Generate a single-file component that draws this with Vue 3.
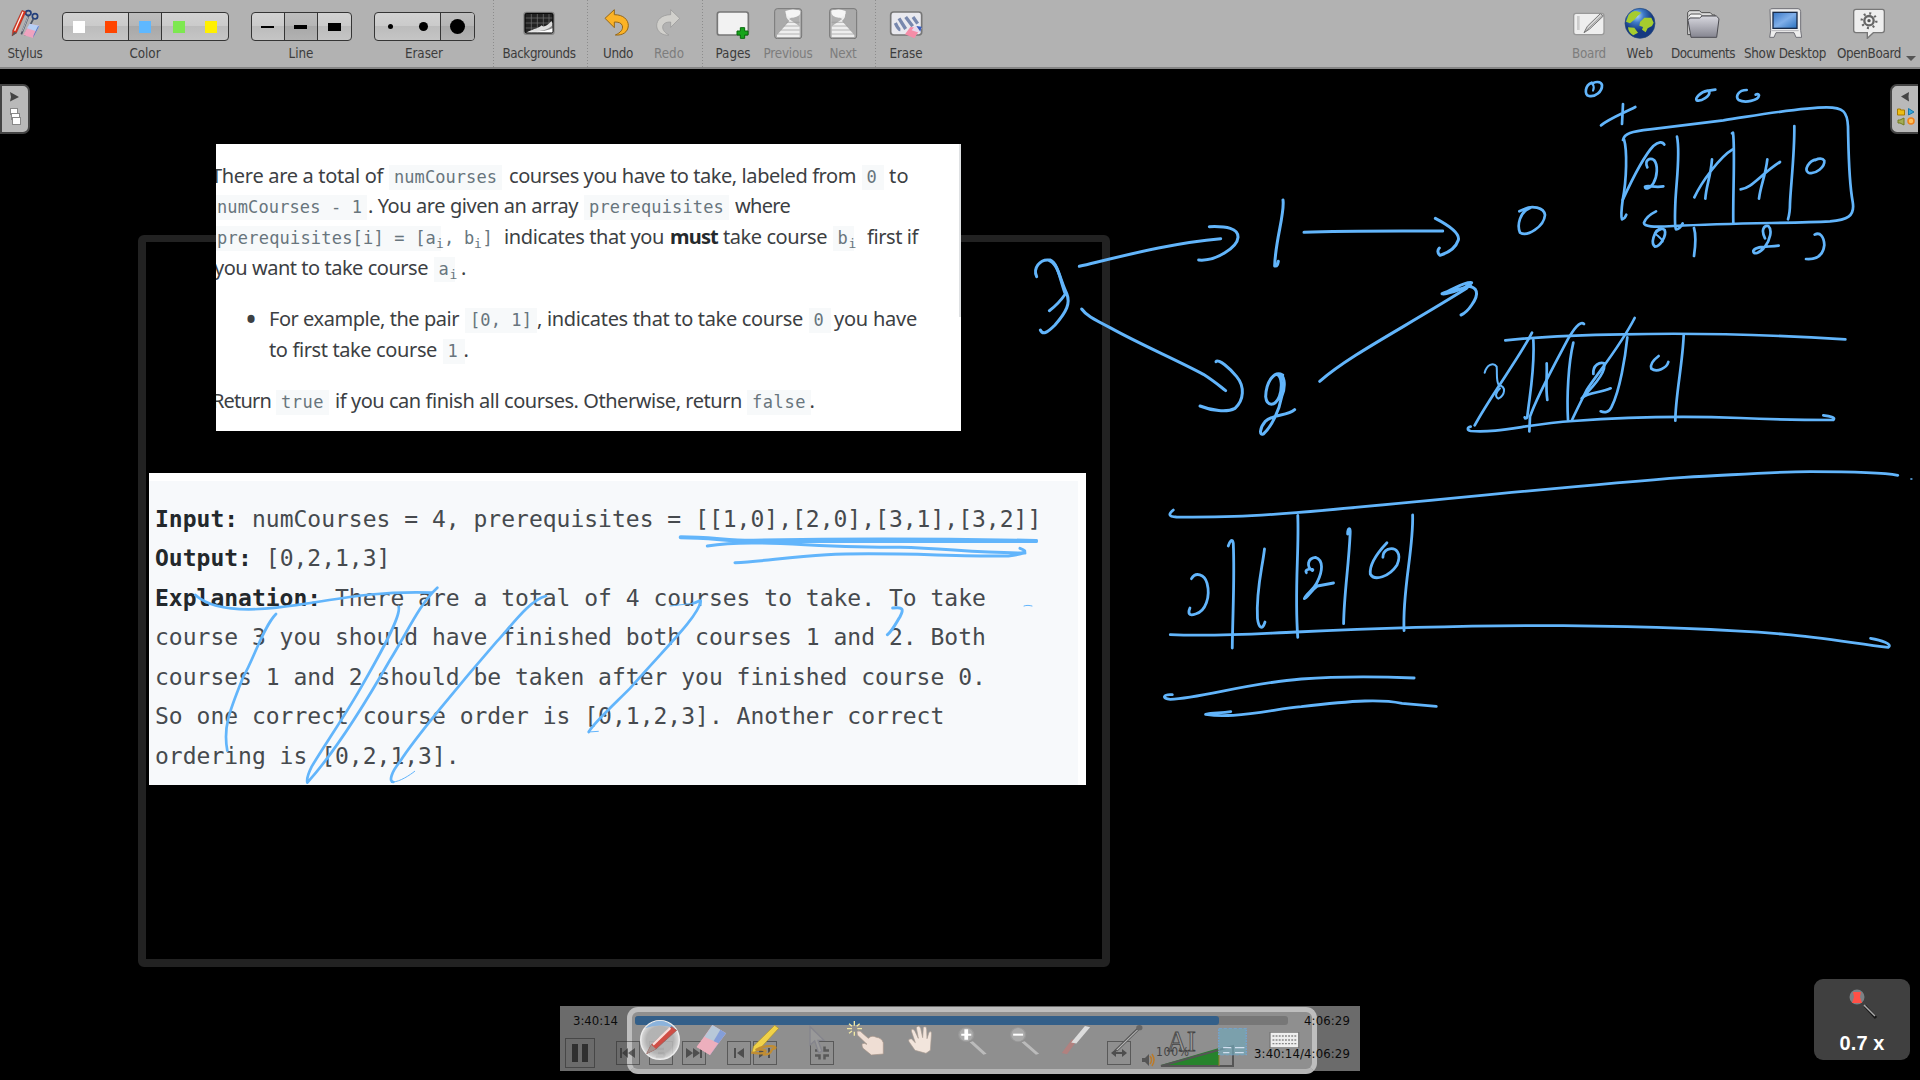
<script setup>
// Stretches or tightens a text run to the width given in pixels.
const vFit = {
  mounted(el, { value }) {
    const range = document.createRange()
    range.selectNodeContents(el)
    const natural = range.getBoundingClientRect().width
    el.style.letterSpacing = (value - natural) / el.textContent.length + 'px'
  }
}

const place = (runs) => {
  let end = 0
  return runs.map(([text, x, w, kind = 'plain', sub = '']) => {
    const run = { text, w, kind, sub, gap: x - end }
    end = x + w
    return run
  })
}

const statement = [
  [['There are a total of', -5, 172], ['numCourses', 178, 103, 'code'], ['courses you have to take, labeled from', 293, 347], ['0', 650.5, 12, 'code'], ['to', 673, 20]],
  [['numCourses - 1', 1, 145, 'code'], ['. You are given an array', 152, 210], ['prerequisites', 373, 135, 'code'], ['where', 519, 55]],
  [['prerequisites[i] = [a', 1, 219, 'code', 'i'], [', b', 228, 30, 'code flat', 'i'], [']', 266.5, 11, 'code flat'], ['indicates that you', 288, 160], ['must', 454, 48, 'bold'], ['take course', 507, 104], ['b', 621.5, 11, 'code', 'i'], ['first if', 651, 51]],
  [['you want to take course', -2, 214], ['a', 222.5, 11, 'code', 'i'], ['.', 245, 5]],
  [['•', 29, 12, 'dot'], ['For example, the pair', 53, 190], ['[0, 1]', 254, 62, 'code'], [', indicates that to take course', 321, 266], ['0', 597.5, 12, 'code'], ['you have', 618, 83]],
  [['to first take course', 53, 168], ['1', 231.5, 12, 'code'], ['.', 247.5, 5]],
  [['Return', -4, 59], ['true', 65, 43, 'code'], ['if you can finish all courses. Otherwise, return', 119, 407], ['false', 536, 54, 'code'], ['.', 593.5, 5]]
].map(place)

const example = [
  ['Input:', ' numCourses = 4, prerequisites = [[1,0],[2,0],[3,1],[3,2]]'],
  ['Output:', ' [0,2,1,3]'],
  ['Explanation:', ' There are a total of 4 courses to take. To take'],
  ['', 'course 3 you should have finished both courses 1 and 2. Both'],
  ['', 'courses 1 and 2 should be taken after you finished course 0.'],
  ['', 'So one correct course order is [0,1,2,3]. Another correct'],
  ['', 'ordering is [0,2,1,3].']
]

const third = 1 / 3
const ink = [
  // graph 3 -> 1 -> 0, 3 -> 2 -> 0
  { t: `translate(1000 180) scale(${third})`, w: 3, p: [
    'M110 290C98 265 120 238 145 240C175 250 180 300 200 340C212 370 200 395 165 435C140 460 128 465 121 450',
    'M150 240C175 250 180 300 196 342C180 365 165 380 148 392',
    'M238 259C380 225 520 188 662 176', 'M628 140C680 138 715 145 714 172C712 200 650 245 596 240',
    'M245 387C258 405 275 415 330 443C430 498 520 535 610 583C640 602 655 615 677 632',
    'M648 545C655 535 690 565 710 590C735 620 732 660 705 685C680 698 635 692 600 678',
    'M849 60C855 100 826 180 824 258C832 260 834 250 835 244',
    'M912 157C1050 152 1200 154 1328 153', 'M1306 115C1350 138 1380 160 1375 180C1365 210 1340 220 1320 226C1312 220 1312 210 1318 204',
    'M848 585C820 570 798 610 797 650C800 680 825 680 838 650C848 620 845 590 832 584C855 575 858 620 845 650C838 690 815 740 790 762C778 768 778 745 795 725C820 700 860 710 884 689',
    'M959 604C1050 525 1200 450 1400 325', 'M1326 341C1360 330 1390 305 1415 308C1400 325 1350 340 1330 342M1350 336L1412 318', 'M1400 318C1432 320 1440 340 1415 375C1405 390 1395 400 1383 405'
  ] },
  // in-degree table and queue
  { t: `translate(1440 70) scale(${third})`, w: 2.7, p: [
    'M455 38C435 45 432 75 447 78C465 82 487 65 486 45C484 33 462 34 458 42',
    'M483 166C510 145 545 132 586 111M549 102L546 162',
    'M803 62C780 66 765 85 770 91C785 95 810 78 808 66C806 60 795 62 790 66M806 62L826 59',
    'M920 60C895 60 885 80 896 90C915 100 955 92 957 76C955 71 950 72 947 74',
    'M549 210C552 190 575 184 630 178L850 151C950 136 1080 112 1160 112C1210 112 1222 125 1224 170C1226 260 1226 330 1238 395C1246 440 1220 450 1170 454C1050 460 900 458 700 468C640 472 610 470 612 458C618 440 632 432 648 424',
    'M552 208C562 240 560 330 548 390C544 420 542 440 546 448C554 446 557 440 559 434',
    'M548 390C580 320 610 260 640 228C655 214 668 214 673 224',
    'M622 292C612 270 630 262 642 270C655 285 652 320 640 340C630 356 615 360 615 350C625 345 645 354 670 349',
    'M711 200C722 250 708 340 706 400C705 430 703 470 708 478C716 478 724 468 728 460',
    'M816 268C812 320 798 350 796 386M763 382C785 335 840 260 878 238',
    'M876 190L879 188C886 240 878 380 880 460',
    'M982 268C976 320 962 345 957 386M902 358C935 355 960 315 1020 276',
    'M1063 168C1064 250 1052 350 1050 400C1050 420 1048 435 1044 448',
    'M1130 268C1105 272 1092 300 1105 308C1128 315 1155 290 1153 272C1148 264 1136 265 1126 270',
    'M662 478C640 485 632 520 645 530C662 530 680 495 674 480C664 470 648 480 645 490',
    'M762 474C770 500 766 530 762 558',
    'M975 505C962 480 972 465 985 468C998 480 990 510 975 530C960 550 938 556 940 542C950 526 985 532 1016 527',
    'M1124 494C1140 485 1152 500 1153 525C1150 550 1135 570 1098 567',
    'M270 414C240 425 230 465 240 488C262 502 312 470 315 435C312 412 275 405 252 418L238 424',
    'M196 811C300 800 420 795 550 793C750 788 1000 795 1216 808',
    'M92 1070C82 1072 80 1080 92 1083C180 1090 260 1062 400 1053C600 1038 750 1038 900 1044C1020 1050 1120 1050 1180 1050C1188 1042 1170 1038 1150 1036',
    'M276 788C240 860 150 980 104 1066',
    'M280 810C285 900 268 980 262 1040C260 1048 255 1046 254 1042',
    'M432 762C420 750 400 780 385 805C340 890 290 980 270 1040L268 1084',
    'M320 880C322 920 316 950 322 990', 'M400 818C385 880 380 980 384 1050',
    'M584 744C540 830 480 900 440 960C425 990 410 1020 396 1050',
    'M460 912C458 885 480 875 492 880C500 900 470 940 425 985C445 965 480 970 512 955',
    'M562 802C556 860 540 960 515 1010C508 1026 495 1030 482 1024',
    'M656 858C640 870 630 885 634 896C650 908 680 895 685 876',
    'M731 796C728 880 706 980 706 1052'
  ] },
  { t: `translate(1440 70) scale(${third})`, w: 2, p: [
    'M134 908C140 885 160 875 170 890C172 915 168 930 176 945C200 950 195 975 175 986C165 980 165 970 180 955',
    'M458 42C462 48 462 56 459 62', 'M645 490C655 500 665 505 668 515'
  ] },
  // resulting order 3, 1, 2, 0
  { t: `translate(1130 450) scale(.5038 ${third})`, w: 2.8, p: [
    'M86 180C76 192 76 200 92 201C180 202 230 200 330 188C560 160 850 110 1100 82C1200 75 1270 65 1350 65C1420 65 1490 66 1524 76',
    'M80 554C170 560 240 552 330 546C500 534 700 526 860 527C1050 530 1200 540 1300 553C1370 562 1440 580 1505 592C1515 582 1490 570 1470 565',
    'M122 386C130 365 148 372 153 400C160 440 150 485 130 492C116 500 115 488 119 474',
    'M195 288C198 275 203 262 205 280C208 380 204 480 203 594',
    'M267 297C262 360 250 420 253 505C255 530 262 545 268 516',
    'M333 196C336 300 326 420 333 562',
    'M350 368C345 355 368 355 362 362C350 350 352 325 368 322C385 330 382 365 372 395C365 420 350 430 346 446C352 445 360 420 372 408L404 399',
    'M432 252C432 235 438 228 437 250C434 350 425 430 424 521',
    'M510 278C490 310 475 345 477 372C485 395 515 380 530 345C540 310 528 290 512 298C502 305 502 315 502 322',
    'M561 195C563 300 540 420 544 542',
    'M84 734C66 732 62 746 80 748C140 745 230 700 340 687C420 678 500 680 564 684',
    'M200 785C180 790 165 788 150 793C180 800 190 796 205 796C260 790 300 775 340 770C450 750 500 748 540 760L608 769'
  ] },
  { t: `translate(1130 450) scale(.5038 ${third})`, w: 1.5, p: ['M1550 87L1552 87'] },
  // marks over the example
  { t: `translate(130 460) scale(${third})`, w: 2.7, p: [
    'M196 405C240 445 330 455 440 443C600 425 700 392 905 398',
    'M438 462C400 500 370 600 340 650C300 750 278 800 292 872',
    'M806 440C815 470 740 600 700 670C650 760 580 860 545 920C530 950 530 960 532 968C620 870 700 740 780 600C830 520 870 430 922 383',
    'M1248 408C1200 420 1150 490 1100 545C1000 660 850 840 810 905C785 935 775 965 790 966',
    'M1690 430C1705 425 1712 418 1712 424C1705 470 1600 570 1500 685C1450 735 1390 790 1376 816'
  ] },
  { t: `translate(130 460) scale(${third})`, w: 1, p: ['M790 966C810 965 840 945 854 934', 'M1376 816L1405 814', 'M1620 438L1690 430', 'M2682 438C2690 435 2698 436 2706 438'] },
  { t: `translate(620 460) scale(${third})`, w: 3, p: [
    'M262 258C400 235 560 262 840 262C980 265 1060 279 1215 279',
    'M1200 265C1230 275 1210 282 1165 288C1000 290 800 275 620 284C500 290 430 305 345 308',
    'M818 444C850 440 852 448 840 470C825 495 815 515 802 524'
  ] },
  { t: `translate(620 460) scale(${third})`, w: 4, p: ['M182 232C270 232 330 243 400 242C600 238 900 236 1248 243', 'M400 243L1248 243'] }
]

const swatches = ['#ffffff', '#ff4500', '#5fb8ff', '#7de850', '#fff000']
</script>

<template>
  <div class="screen">
    <header class="toolbar">
      <div class="tool w50">
        <svg class="icon" viewBox="24 20 102 96">
          <g fill="none" stroke="#223f7c" stroke-width="5"><ellipse cx="85" cy="38" rx="8" ry="7"/><ellipse cx="105" cy="48" rx="8" ry="8"/></g>
          <path d="M86 46L64 102M100 56L74 105" stroke="#4e5666" stroke-width="5"/>
          <path d="M84 50L67 93" stroke="#e2e5ec" stroke-width="2"/>
          <path d="M66 30L78 34L50 97L36 107L38 90Z" fill="#d9321e" stroke="#7c3028"/><path d="M69 34L44 91" stroke="#fff0e7" stroke-width="4"/>
          <path d="M35 108L42 94L51 98Z" fill="#555"/>
          <path d="M89 70L118 76L99 113L70 104Z" fill="#efa3bf"/><path d="M89 70L118 76L109 93L81 84Z" fill="#b7cff5"/><path d="M118 76L99 113L101 104L113 79Z" fill="#557bc5"/>
        </svg>
        <span v-fit="35">Stylus</span>
      </div>
      <div class="tool w190">
        <div class="segments s167"><i v-for="(c, n) in swatches" :key="c" :class="{ on: n === 2 }"><b class="swatch" :style="{ background: c }"></b></i></div>
        <span v-fit="31">Color</span>
      </div>
      <div class="tool w122">
        <div class="segments s101"><i><b class="thin"></b></i><i class="on"><b class="mid"></b></i><i><b class="fat"></b></i></div>
        <span v-fit="25">Line</span>
      </div>
      <div class="tool w124">
        <div class="segments s101"><i><b class="d5"></b></i><i><b class="d9"></b></i><i class="on last"><b class="d15"></b></i></div>
        <span v-fit="38">Eraser</span>
      </div>
      <hr class="sep">
      <div class="tool w94">
        <svg class="icon" viewBox="156 20 102 96">
          <rect x="160" y="34" width="94" height="70" rx="9" fill="#858585"/><rect x="165" y="39" width="84" height="59" rx="5" fill="#222" stroke="#000" stroke-width="3"/>
          <path d="M167 53H247M167 68H247M167 83H220M184 41V96M202 41V96M220 41V80M237 41V72" stroke="#777" stroke-width="2"/>
          <path d="M170 96C194 84 207 84 215 75C219 84 236 73 244 62L247 68V96Z" fill="#ddd"/><path d="M187 94C212 92 232 89 246 76V96Z" fill="#888"/><path d="M167 96C202 92 230 94 247 84V96Z" fill="#fff"/>
        </svg>
        <span v-fit="73">Backgrounds</span>
      </div>
      <hr class="sep">
      <div class="tool w50">
        <svg class="icon" viewBox="393 20 102 96"><path d="M405 54L433 28V43C460 43 475 58 475 76C474 96 457 106 436 104C452 97 460 87 457 76C454 67 445 65 433 65V82Z" fill="#fcb326" stroke="#956718" stroke-width="3"/></svg>
        <span v-fit="30">Undo</span>
      </div>
      <div class="tool w52 off">
        <svg class="icon" viewBox="546 20 102 96"><path d="M629 54L602 28V43C574 44 560 58 560 77C562 96 579 106 597 104C583 97 575 86 579 75C583 67 590 65 602 65V81Z" fill="#d1d0cc" stroke="#969696" stroke-width="2"/></svg>
        <span v-fit="30">Redo</span>
      </div>
      <hr class="sep">
      <div class="tool w50">
        <svg class="icon" viewBox="735 20 102 96"><rect x="739" y="35" width="93" height="69" rx="7" fill="#f2f2f2" stroke="#777" stroke-width="5"/><path d="M808 82H821V92H831V104H821V114H808V104H798V92H808Z" fill="#16a51b" stroke="#086b0c" stroke-width="3"/></svg>
        <span v-fit="35">Pages</span>
      </div>
      <div class="tool w60 off">
        <svg class="icon" viewBox="900 20 102 96"><rect x="911" y="25" width="81" height="90" rx="8" fill="#aaa" stroke="#777" stroke-width="3"/><path d="M918 104L955 62C937 47 946 31 969 29H986V110H918Z" fill="#eee"/><path d="M954 56L986 78V29L965 50Z" fill="#b1b1b1"/><path d="M943 32Q966 23 988 32Q990 49 966 52Q943 50 943 32" fill="#f5f5f5"/><path d="M946 66H986M938 77H986M929 89H986M919 101H986" stroke="#999" stroke-width="2"/></svg>
        <span v-fit="49">Previous</span>
      </div>
      <div class="tool w50 off">
        <svg class="icon" viewBox="1065 20 102 96"><rect x="1076" y="25" width="81" height="90" rx="8" fill="#aaa" stroke="#777" stroke-width="3"/><path d="M1150 104L1113 62C1131 47 1122 31 1099 29H1082V110H1150Z" fill="#eee"/><path d="M1114 56L1082 78V29L1103 50Z" fill="#b1b1b1"/><path d="M1081 32Q1103 23 1124 32Q1127 49 1103 52Q1080 50 1081 32" fill="#f5f5f5"/><path d="M1082 66H1120M1082 77H1130M1082 89H1139M1082 101H1149" stroke="#999" stroke-width="2"/></svg>
        <span v-fit="27">Next</span>
      </div>
      <hr class="sep">
      <div class="tool w50">
        <svg class="icon" viewBox="1254 20 102 96"><rect x="1259" y="35" width="93" height="69" rx="9" fill="#e9e9ef" stroke="#777" stroke-width="5"/><path d="M1273 68Q1282 88 1288 88M1284 54L1304 86M1304 50L1325 78M1326 50L1340 70" stroke="#7888ae" stroke-width="10"/><path d="M1318 80L1350 83L1330 114L1302 102Z" fill="#f58da8"/><path d="M1332 77L1352 83L1345 97L1322 90Z" fill="#e7d8eb"/><path d="M1336 77L1352 79L1348 94Z" fill="#385dbc"/></svg>
        <span v-fit="33">Erase</span>
      </div>
      <div class="space"></div>
      <div class="tool w50 off">
        <svg class="icon" viewBox="96 20 102 96"><rect x="101" y="39" width="91" height="64" rx="7" fill="#eee" stroke="#999" stroke-width="4"/><rect x="111" y="47" width="8" height="42" fill="#ccc"/><path d="M132 97L142 78L181 40L190 47L149 86Z" fill="#d5d5d5" stroke="#777" stroke-width="3"/><path d="M132 97L186 46" stroke="#777" stroke-width="2"/></svg>
        <span v-fit="34">Board</span>
      </div>
      <div class="tool w52">
        <svg class="icon" viewBox="249 20 102 96"><defs><radialGradient id="sea" cx=".4" cy=".25"><stop stop-color="#b4d8ff"/><stop offset=".45" stop-color="#3e7ac7"/><stop offset="1" stop-color="#153980"/></radialGradient></defs><circle cx="300" cy="69" r="45" fill="url(#sea)" stroke="#244778" stroke-width="2"/><path d="M266 43Q278 29 291 33L304 37L293 47L283 58L270 69L258 64ZM300 65L313 52H334L341 67L336 77L323 84L317 96L306 88L309 80L298 76ZM264 81L283 82L294 97L280 105Q265 97 264 81" fill="#a6cc2e"/></svg>
        <span v-fit="27">Web</span>
      </div>
      <div class="tool w74">
        <svg class="icon" viewBox="438 20 102 96"><defs><linearGradient id="folder" x2="0" y2="1"><stop stop-color="#d8d8df"/><stop offset="1" stop-color="#858590"/></linearGradient></defs><path d="M443 103V36L449 31H478L485 37H511L518 44H525V100Z" fill="#ddd" stroke="#4c4c4c" stroke-width="3"/><path d="M446 48L452 41H481L487 47H520V57" fill="#f4f4f4" stroke="#555" stroke-width="3"/><path d="M444 60L450 53H479L486 47H529L537 55L530 111H453Z" fill="url(#folder)" stroke="#4c4c52" stroke-width="3"/></svg>
        <span v-fit="64">Documents</span>
      </div>
      <div class="tool w90">
        <svg class="icon" viewBox="687 20 102 96"><defs><linearGradient id="desk" x2="1" y2="1"><stop stop-color="#3876c5"/><stop offset=".5" stop-color="#80afe9"/><stop offset="1" stop-color="#2870bd"/></linearGradient></defs><path d="M693 28Q693 25 702 25H777Q785 25 785 34V90L788 111H771L765 97H711L705 111H692L695 91Z" fill="#eee" stroke="#707077" stroke-width="3"/><rect x="702" y="36" width="72" height="48" fill="url(#desk)" stroke="#182b49" stroke-width="4"/><path d="M698 91H779" stroke="#9999a0" stroke-width="2"/></svg>
        <span v-fit="82">Show Desktop</span>
      </div>
      <div class="tool w78">
        <svg class="icon" viewBox="936 20 102 96"><path d="M948 27H1027Q1033 27 1033 34V90Q1033 97 1026 97H1000L982 114V97H948Q941 97 941 90V34Q941 27 948 27" fill="#eee" stroke="#777" stroke-width="4"/><circle cx="987" cy="61" r="14" fill="none" stroke="#666" stroke-width="7"/><circle cx="987" cy="61" r="22" fill="none" stroke="#666" stroke-width="7" stroke-dasharray="6 11.28"/><circle cx="987" cy="61" r="5" fill="#555"/></svg>
        <span v-fit="64">OpenBoard</span>
      </div>
      <svg class="more" viewBox="0 0 10 5"><path d="M0 0H10L5 5Z" fill="#555"/></svg>
    </header>

    <main class="board">
      <div class="frame"></div>
      <section class="card statement">
        <p v-for="(line, n) in statement" :key="n" :class="{ para: n === 4 || n === 6 }">
          <span v-for="(r, k) in line" :key="k" class="run" :class="r.kind" :style="{ marginLeft: r.gap + 'px', width: r.w + 'px' }"><em v-fit="r.w">{{ r.text }}</em><sub v-if="r.sub">{{ r.sub }}</sub></span>
        </p>
      </section>
      <section class="card example">
        <p v-for="(l, n) in example" :key="n"><strong>{{ l[0] }}</strong>{{ l[1] }}</p>
      </section>
      <svg class="ink" viewBox="0 0 1920 1080">
        <g v-for="(g, n) in ink" :key="n" :transform="g.t" :stroke-width="g.w"><path v-for="d in g.p" :key="d" :d="d"/></g>
      </svg>

      <aside class="tab left">
        <svg viewBox="0 0 30 50"><path d="M9 8L18 13L9 17.500L10 13Z" fill="#444"/><g fill="#fff" stroke="#888"><rect x="9.500" y="24.500" width="7" height="6"/><rect x="10.500" y="29.500" width="8" height="6"/><rect x="11.500" y="33.500" width="8" height="7"/></g></svg>
      </aside>
      <aside class="tab right">
        <svg viewBox="0 0 28 50"><path d="M19 8L11 12.500L19 17.500L18.500 12.500Z" fill="#444"/><path d="M7.500 25h3v1h4v5h-7z" fill="#edbd12" stroke="#a77a00"/><path d="M18.500 24.500L24 28L18.500 31Z" fill="#36a7df" stroke="#1577a9"/><path d="M8 36h2l4-2v7l-4-2H8z" fill="#a4ac55" stroke="#737b1d"/><circle cx="21" cy="37" r="3" fill="#ffc05a" stroke="#ee801a" stroke-width="1.500"/></svg>
      </aside>

      <div class="player-bg"></div>
      <div class="palette"></div>
      <div class="player">
        <div class="row">
          <span v-fit="45">3:40:14</span><div class="track"><div class="played"></div></div><span v-fit="46">4:06:29</span>
        </div>
        <div class="row controls">
          <svg class="pause" viewBox="0 0 30 30"><rect x=".5" y=".5" width="29" height="29"/><path class="f" d="M7 6h6v18H7zM17 6h6v18h-6z"/></svg>
          <svg class="c1" viewBox="0 0 24 24"><rect x=".5" y=".5" width="23" height="23"/><path class="f" d="M4 7h2v10H4zM12 7v10L6 12zM19 7v10l-7-5z"/></svg>
          <svg class="c2" viewBox="0 0 24 24"><rect x=".5" y=".5" width="23" height="23"/><path d="M7 8h8M9 12h5q3 2 0 4H7" fill="none" stroke-width="2.500"/></svg>
          <svg class="c2" viewBox="0 0 24 24"><rect x=".5" y=".5" width="23" height="23"/><path class="f" d="M4 7v10l7-5zM11 7v10l7-5zM18 7h2v10h-2z"/></svg>
          <svg class="c3" viewBox="0 0 24 24"><rect x=".5" y=".5" width="23" height="23"/><path class="f" d="M7 7h2v10H7zM17 7v10l-7-5z"/></svg>
          <svg class="c4" viewBox="0 0 24 24"><rect x=".5" y=".5" width="23" height="23"/><path class="f" d="M6 7v10l7-5zM15 7h2v10h-2z"/></svg>
          <svg class="c5" viewBox="0 0 24 24"><rect x=".5" y=".5" width="23" height="23"/><path d="M5 9.500h4.500V5.500M14.500 5.500v4H19M5 14.500h4.500v4M14.500 18.500v-4H19" fill="none" stroke-width="2.500"/></svg>
          <svg class="c6" viewBox="0 0 24 24"><rect x=".5" y=".5" width="23" height="23"/><path class="f" d="M9 8v8l-5-4zM15 8v8l5-4zM9 11h6v2H9z"/></svg>
          <svg class="volume" viewBox="0 0 94 28"><path d="M3 18h3l4-4v12l-4-4H3z" fill="#555"/><path d="M11 16q3 4 0 8M13 14q4 6 0 12" fill="none" stroke="#bb7a29" stroke-width="1.500"/><path d="M22 25L80 8V25Z" fill="#27832c"/><path d="M22 26L94 6V26Z" fill="none" stroke="#555" stroke-width="2"/><path d="M80 9V26" stroke="#918226"/><text x="17" y="16" textLength="33">100%</text></svg>
          <span class="total" v-fit="96">3:40:14/4:06:29</span>
        </div>
      </div>

      <svg class="pens" viewBox="0 0 1920 1080">
        <defs><radialGradient id="ball"><stop stop-color="#bbb"/><stop offset=".7" stop-color="#bbb"/><stop offset="1" stop-color="#eee"/></radialGradient></defs>
        <g :transform="`translate(550 990) scale(${third})`">
          <circle cx="330" cy="150" r="58" fill="url(#ball)" fill-opacity=".82" stroke="#eee" stroke-width="4"/><path d="M285 115Q330 70 375 115Q330 98 285 115" fill="#8bb3dc"/>
          <path d="M365 110L380 121L318 177L290 191L304 164Z" fill="#cf4e46" stroke="#8d5955" stroke-width="2"/><path d="M361 114L309 164" stroke="#f8ddda" stroke-width="7"/><path d="M290 191L304 164L318 177Z" fill="#a49490"/>
          <path d="M487 105L528 130L480 195L440 171Z" fill="#e9afbd"/><path d="M487 105L528 130L505 160L463 141Z" fill="#b7c8d8"/><path d="M511 119L528 130L480 195L475 180Z" fill="#7794d8" opacity=".8"/><path d="M505 160L463 141L440 171L480 195Z" fill="#edafbd"/>
          <path d="M674 106L686 115L626 180L605 190L611 168Z" fill="#f0d148" stroke="#aa902c" stroke-width="2"/><path d="M604 187C652 199 664 173 617 180C650 161 688 170 673 176C656 176 675 194 638 194" fill="none" stroke="#c18d32" stroke-width="7"/>
          <path d="M780 110L780 165L794 153L806 188L816 184L804 151L822 151Z" fill="#999" stroke="#85858d" stroke-width="4"/>
          <path d="M913 93V107M913 125V137M891 116H906M922 116H936M897 101L906 109M929 101L920 109M897 130L906 123" stroke="#f2e9a5" stroke-width="4"/>
          <path d="M921 124Q930 119 940 132L955 145Q965 134 979 142Q994 143 1000 158V192L964 195L939 175Q931 160 943 160L951 163L922 135Z" fill="#efded4" stroke="#a49387" stroke-width="2"/>
          <path d="M1095 181L1077 155Q1073 145 1085 147L1096 158L1084 123Q1084 113 1094 122L1105 145L1099 113Q1107 103 1112 115L1118 143L1120 112Q1130 106 1130 119L1131 146L1137 127Q1146 119 1144 138L1141 181L1128 190Z" fill="#f2e5dc" stroke="#a99b91" stroke-width="2"/>
        </g>
        <g :transform="`translate(940 970) scale(.625 ${third})`">
          <path d="M50 215L72 253M133 215L156 253" stroke="#bbb" stroke-width="6"/>
          <ellipse cx="42" cy="194" rx="12" ry="21" fill="#aaa" stroke="#999" stroke-width="2"/><path d="M34 194H50M42 178V209" stroke="#fff" stroke-width="6"/>
          <ellipse cx="125" cy="194" rx="12" ry="21" fill="#aaa" stroke="#999" stroke-width="2"/><path d="M117 194H133" stroke="#fff" stroke-width="6"/>
          <path d="M215 210L199 251" stroke="#c87876" stroke-width="9" opacity=".6"/><path d="M236 170L214 219" stroke="#ddd" stroke-width="9"/>
          <path d="M319 173L281 243" stroke="#555" stroke-width="6"/><path d="M317 178L283 240" stroke="#bbb" stroke-width="2"/><ellipse cx="319" cy="173" rx="5" ry="8" fill="#666"/>
          <rect x="446" y="175" width="44" height="80" fill="#72a7b8" fill-opacity=".7" stroke="#72a5d7" stroke-width="2" stroke-dasharray="5 3"/><path d="M453 233H466M453 248H463M472 233H487M472 248H486" stroke="#d1dfef" stroke-width="4"/>
          <rect x="528" y="187" width="46" height="46" fill="#eee" stroke="#777" stroke-width="2"/><path d="M532 198H571M532 210H571M532 221H571" stroke="#888" stroke-width="4" stroke-dasharray="3 2"/>
        </g>
        <text class="ai" x="1167" y="1051" textLength="29" lengthAdjust="spacingAndGlyphs">AI</text>
      </svg>

      <div class="zoom">
        <svg viewBox="0 0 40 48"><circle cx="17" cy="17" r="7.500" fill="#7b8185"/><path d="M13 12L21 12L20 17L22 23H12L14 17Z" fill="#ff5046"/><path d="M25 26L36 38" stroke="#171717" stroke-width="3"/><path d="M24 25L35 36" stroke="#aaa" stroke-width="1.500"/></svg>
        <span v-fit="45">0.7 x</span>
      </div>
    </main>
  </div>
</template>

<style>
body { background: #000; overflow: hidden; }
</style>

<style scoped>
.screen { width: 1920px; height: 1080px; position: relative; overflow: hidden; background: #000; display: flex; flex-direction: column; }
.toolbar { height: 69px; flex: none; box-sizing: border-box; border-bottom: 2px solid #858585; background: #b2b2b2; display: flex; font: 13.300px/16px "DejaVu Sans Condensed", "DejaVu Sans", sans-serif; color: #3c3c3c; position: relative; z-index: 2; }
.tool { flex: none; display: flex; flex-direction: column; align-items: center; white-space: nowrap; padding-top: 7px; box-sizing: border-box; }
.tool span { margin-top: 7px; }
.off { color: #7d7d7d; }
.w50 { width: 50px; } .w52 { width: 52px; } .w60 { width: 60px; } .w74 { width: 74px; } .w78 { width: 78px; } .w90 { width: 90px; } .w94 { width: 94px; } .w122 { width: 122px; } .w124 { width: 124px; } .w190 { width: 190px; }
.icon { width: 34px; height: 32px; display: block; }
.space { flex: 1; }
.sep { border: 0; width: 1px; background: repeating-linear-gradient(#8c8c8c 0 1px, #b2b2b2 1px 3px); margin: 0 5px 0 7px; height: 67px; flex: none; }
.w94 { margin-left: -7px; }
.w94 + .sep { margin-left: 1px; }
.more { width: 10px; height: 5px; margin: 56px 4px 0 -2px; }
.segments { box-sizing: border-box; height: 29px; margin: 5px 0 -2px; border: 1px solid #353535; border-radius: 4px; display: flex; overflow: hidden; background: linear-gradient(#d2d2d2, #cbcbcb 48%, #bcbcbc 50%, #c5c5c5); }
.s167 { width: 167px; } .s101 { width: 101px; }
.segments i { flex: 1; display: flex; align-items: center; justify-content: center; box-sizing: border-box; }
.segments .on { background: linear-gradient(#bebebe, #b5b5b5 48%, #a8a8a8 50%, #b2b2b2); border: solid #353535; border-width: 0 1px; }
.segments .last { border-right: 0; }
.swatch { width: 12px; height: 12px; }
.thin, .mid, .fat { width: 13px; background: #000; height: 2px; }
.mid { height: 4px; } .fat { height: 8px; }
.d5, .d9, .d15 { width: 5px; height: 5px; border-radius: 50%; background: #000; }
.d9 { width: 9px; height: 9px; } .d15 { width: 15px; height: 15px; }

.board { flex: 1; }
.frame { position: absolute; left: 138px; top: 235px; width: 972px; height: 732px; box-sizing: border-box; border: 8px solid #222; border-top-width: 7px; border-radius: 6px; }
.card { position: absolute; overflow: hidden; box-sizing: border-box; }
.card p { margin: 0; white-space: pre; }
.statement { left: 216px; top: 144px; width: 745px; height: 287px; background: #fff; padding-top: 16.500px; font: 20px/30px "Noto Sans", "Open Sans", sans-serif; color: #3c4043; }
.statement::after { content: ""; position: absolute; right: 0; top: 0; width: 2px; height: 173px; background: #dfe1e3; }
.statement p { display: flex; height: 30.75px; }
.statement .para { margin-top: 20.500px; }
.run { flex: none; position: relative; white-space: pre; }
.run em { font-style: normal; }
.bold { font-weight: 700; color: #24292c; }
.code { font: 17px/25px "DejaVu Sans Mono", monospace; color: #68757d; height: 25px; margin-top: 4px; background: #f7f9fa; box-shadow: -5px 0 #f7f9fa, 5px 0 #f7f9fa; }
.flat { background: none; box-shadow: none; }
.code sub { font-size: 13px; line-height: 0; vertical-align: -4px; letter-spacing: 0; }
.dot { font-size: 32px; }
.example { left: 149px; top: 473px; width: 937px; height: 312px; background: #f7f9fb; border: solid #fff; border-width: 8px 8px 0 0; padding: 18.500px 0 0 6px; font: 23px/39.550px "DejaVu Sans Mono", monospace; color: #464a4e; }
.example strong { color: #23282b; }
.ink, .pens { position: absolute; left: 0; top: 0; width: 1920px; height: 1080px; pointer-events: none; }
.ink { fill: none; stroke: #62b5fb; stroke-linecap: round; stroke-linejoin: round; }
.ink path { vector-effect: non-scaling-stroke; }
.tab { position: absolute; top: 84px; height: 50px; box-sizing: border-box; background: #b9b9b9; border: 2px solid #444; border-radius: 0 7px 7px 0; }
.tab svg { position: absolute; left: 0; top: -2px; height: 50px; width: 30px; }
.left { left: 0; width: 30px; }
.left svg { left: -1px; }
.right { left: 1890px; width: 28px; border-right: 0; border-radius: 7px 0 0 7px; }
.right svg { width: 28px; left: -2px; }

.player-bg, .player { position: absolute; left: 560px; top: 1006px; width: 800px; height: 65px; }
.player-bg { background: #6b6b6b; }
.palette { position: absolute; left: 627px; top: 1007px; width: 690px; height: 67px; box-sizing: border-box; border: 5px solid #bebebe; border-bottom-color: #b5b5b5; border-radius: 11px; background: rgba(180, 180, 180, .5); }
.player { font: 13px/16px "DejaVu Sans Condensed", "DejaVu Sans", sans-serif; color: #0c0c0c; }
.row { display: flex; white-space: nowrap; }
.row > span:first-child { margin: 7px 0 0 13px; width: 45px; }
.track { margin: 10px 16px 0 17px; width: 653px; height: 9px; border-radius: 3px; background: #777; flex: none; }
.played { width: 584px; height: 9px; border-radius: 3px; background: #335f89; }
.row > span:last-child { margin-top: 7px; }
.controls { height: 40px; margin-top: 9px; }
.controls svg { flex: none; width: 24px; height: 24px; margin-top: 3px; fill: none; stroke: rgba(35, 35, 35, .5); overflow: visible; }
.controls .f { fill: rgba(35, 35, 35, .6); stroke: none; }
.controls .pause { width: 30px; height: 30px; margin: 0 0 0 5px; }
.controls .pause .f { fill: #303030; }
.controls .c1 { margin-left: 21px; } .controls .c2 { margin-left: 9px; } .controls .c3 { margin-left: 21px; } .controls .c4 { margin-left: 2px; } .controls .c5 { margin-left: 33px; } .controls .c6 { margin-left: 273px; }
.controls .volume { width: 94px; height: 28px; margin: 2px 0 0 8px; stroke: none; }
.volume text { fill: #444; font-size: 12px; }
.row > .total:last-child { margin: 8px 0 0 21px; }
.pens text { font-family: "Liberation Serif", serif; font-size: 29px; fill: #999; stroke: #444; stroke-width: .8; }
.zoom { position: absolute; left: 1814px; top: 979px; width: 96px; height: 81px; border-radius: 9px; background: #404040; display: flex; flex-direction: column; align-items: center; font: bold 20px/24px "Liberation Sans", sans-serif; color: #fff; }
.zoom svg { width: 40px; height: 48px; margin-left: -4px; margin-top: 1px; }
.zoom span { margin-top: 3px; white-space: nowrap; }
</style>
